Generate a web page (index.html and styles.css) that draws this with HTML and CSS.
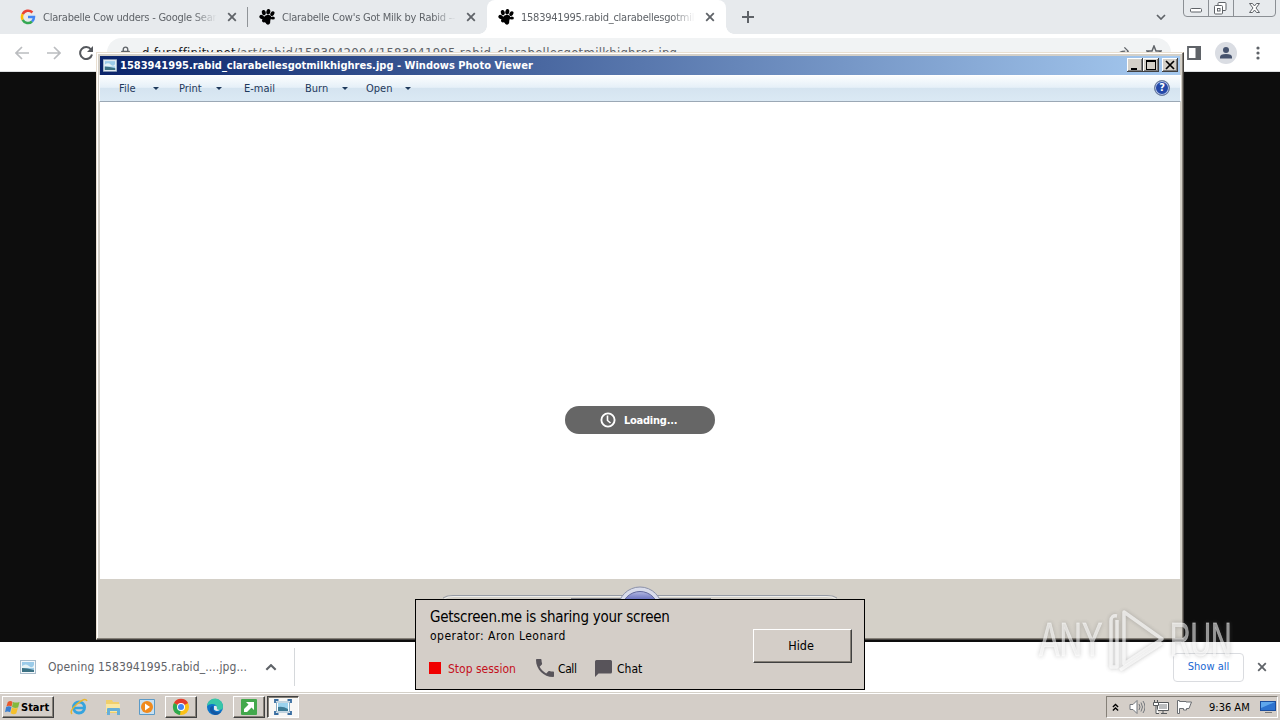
FILE: index.html
```html
<!DOCTYPE html>
<html lang="en">
<head>
    <meta charset="UTF-8">
    <title>Desktop</title>
    <link rel="stylesheet" href="styles.css">
</head>
<body>
    <svg class="defs" width="0" height="0">
        <symbol id="paw" viewBox="0 0 16 16">
            <g fill="#000">
                <ellipse cx="2.7" cy="8" rx="2.4" ry="2" transform="rotate(30 2.7 8)"/>
                <ellipse cx="4.8" cy="3.6" rx="2" ry="2.7" transform="rotate(-15 4.8 3.6)"/>
                <ellipse cx="9.3" cy="2.8" rx="2" ry="2.8" transform="rotate(12 9.3 2.8)"/>
                <ellipse cx="13.4" cy="4.6" rx="1.8" ry="2.5" transform="rotate(35 13.4 4.6)"/>
                <ellipse cx="13.8" cy="9" rx="2.1" ry="1.6"/>
                <path d="M4.5 8.5Q7 4.8 11 6.3Q13 7.4 11.8 10Q11 12 11.2 14Q9.5 16.8 7.4 14.9Q6.6 12.7 4.5 13.4Q1.4 12.4 4.5 8.5Z"/>
            </g>
        </symbol>
        <symbol id="cross" viewBox="0 0 10 10">
            <path d="M1.2 1.2l7.6 7.6M8.8 1.2L1.2 8.8" stroke="#5f6368" stroke-width="1.8"/>
        </symbol>
        <symbol id="picture" viewBox="0 0 16 14">
            <rect x=".5" y=".5" width="15" height="13" fill="#f4f8fb" stroke="#a9bccb"/>
            <rect x="2" y="2" width="12" height="10" fill="#9bcbe9"/>
            <path d="M2 6q4-3 7 0t5-1v3H2z" fill="#e4f2f5"/>
            <path d="M2 8q5 0 12 2v2H2z" fill="#3c7284"/>
        </symbol>
    </svg>

    <div class="browser">
        <div class="tabs">
            <div class="tab tab-first">
                <svg class="favicon" viewBox="0 0 16 16" fill="none" stroke-width="2.5">
                    <path d="M12.4 3.5A6 6 0 0 0 2.7 5.2" stroke="#ea4335"/>
                    <path d="M2.7 5.2a6 6 0 0 0 0 5.6" stroke="#fbbc05"/>
                    <path d="M2.7 10.8a6 6 0 0 0 9.3 1.7" stroke="#34a853"/>
                    <path d="M8 8h6a6 6 0 0 1-2 4.5" stroke="#4285f4"/>
                </svg>
                <span class="tab-title">Clarabelle Cow udders - Google Sear</span>
                <svg class="tab-close"><use href="#cross"/></svg>
            </div>
            <div class="tab tab-second">
                <svg class="favicon"><use href="#paw"/></svg>
                <span class="tab-title">Clarabelle Cow's Got Milk by Rabid --</span>
                <svg class="tab-close"><use href="#cross"/></svg>
            </div>
            <div class="tab tab-active">
                <svg class="favicon"><use href="#paw"/></svg>
                <span class="tab-title">1583941995.rabid_clarabellesgotmil</span>
                <svg class="tab-close"><use href="#cross"/></svg>
            </div>
            <svg class="new-tab" viewBox="0 0 12 12"><path d="M6 0v12M0 6h12" stroke="#5f6368" stroke-width="2"/></svg>
            <svg class="tab-search" viewBox="0 0 10 6"><path d="M1 1l4 4 4-4" fill="none" stroke="#5f6368" stroke-width="1.7"/></svg>
            <svg class="caption-buttons" viewBox="0 0 94 18" fill="none">
                <path d="M.5 0v13q0 3.500 3.500 3.500h85q3.500 0 3.500-3.500V0M25.500 0v16M50.500 0v16" stroke="#8b8f94"/>
                <rect x="7.500" y="8.500" width="11" height="3.500" rx="1" stroke="#5f6368" fill="#fff"/>
                <rect x="35" y="2.500" width="8" height="8" rx="1" stroke="#5f6368" fill="#fff"/>
                <rect x="31.500" y="5.500" width="8" height="8.500" rx="1" stroke="#5f6368" fill="#fff"/>
                <rect x="34.500" y="8.500" width="2.500" height="2.500" stroke="#5f6368"/>
                <path d="M66.500 3.500h3l2 2.500 2-2.500h3l-3.500 4.500 3.500 4.500h-3l-2-2.500-2 2.500h-3l3.500-4.500z" stroke="#5f6368" fill="#fff"/>
            </svg>
        </div>
        <div class="nav">
            <svg class="nav-arrow" viewBox="0 0 14 14"><path d="M14 7H1M7 1L1 7l6 6" fill="none" stroke="#bbbdc0" stroke-width="1.7"/></svg>
            <svg class="nav-arrow" viewBox="0 0 14 14"><path d="M0 7h13M7 1l6 6-6 6" fill="none" stroke="#bbbdc0" stroke-width="1.7"/></svg>
            <svg class="nav-reload" viewBox="0 0 14 14"><path d="M12 3.500A6 6 0 1 0 13 8.500" fill="none" stroke="#55585d" stroke-width="2"/><path d="M14 0v6H8z" fill="#55585d"/></svg>
            <div class="address">
                <svg class="lock" viewBox="0 0 10 14"><path d="M2.500 6V3.500a2.500 2.500 0 0 1 5 0V6" fill="none" stroke="#5f6368" stroke-width="1.500"/><rect x="0" y="5" width="10" height="8" rx="1" fill="#5f6368"/></svg>
                <span class="url"><b>d.furaffinity.net</b>/art/rabid/1583942004/1583941995.rabid_clarabellesgotmilkhighres.jpg</span>
                <svg class="share" viewBox="0 0 16 14"><path d="M1 13V6M3 10q1-5 8-5M10 1l4 4-4 4" fill="none" stroke="#5f6368" stroke-width="1.500"/></svg>
                <svg class="star" viewBox="0 0 16 16"><path d="M8 1l2 5h5l-4 3 1.500 5L8 11l-4.500 3L5 9 1 6h5z" fill="none" stroke="#5f6368" stroke-width="1.500"/></svg>
            </div>
            <svg class="side-panel" viewBox="0 0 14 14"><path d="M1 1h12v12H1z" fill="#fff" stroke="#5f6368" stroke-width="1.800"/><path d="M8.500 0H14v14H8.500z" fill="#5f6368"/></svg>
            <svg class="avatar" viewBox="0 0 22 22"><circle cx="11" cy="11" r="11" fill="#dadde3"/><circle cx="11" cy="8" r="3" fill="#46536e"/><path d="M5 16.500v-1.500q0-3 6-3t6 3v1.500z" fill="#46536e"/></svg>
            <svg class="dots" viewBox="0 0 4 14" fill="#5f6368"><circle cx="2" cy="2" r="1.600"/><circle cx="2" cy="7" r="1.600"/><circle cx="2" cy="12" r="1.600"/></svg>
        </div>
        <div class="page"></div>
        <div class="downloads">
            <div class="download-item">
                <svg class="file-icon"><use href="#picture"/></svg>
                <span class="file-name">Opening 1583941995.rabid_....jpg...</span>
                <svg class="chevron-up" viewBox="0 0 10 6"><path d="M1 5l4-4 4 4" fill="none" stroke="#5f6368" stroke-width="1.800"/></svg>
            </div>
            <div class="show-all">Show all</div>
            <svg class="shelf-close"><use href="#cross"/></svg>
        </div>
    </div>

    <div class="viewer">
        <div class="viewer-title">
            <svg class="viewer-icon"><use href="#picture"/></svg>
            <span class="viewer-name">1583941995.rabid_clarabellesgotmilkhighres.jpg - Windows Photo Viewer</span>
            <div class="classic-buttons">
                <svg viewBox="0 0 16 14"><path d="M4 10h6v2H4z"/></svg>
                <svg viewBox="0 0 16 14"><path d="M3 2h10v10H3zM4 4v7h8V4z" fill-rule="evenodd"/></svg>
                <svg class="classic-close" viewBox="0 0 16 14"><path d="M4 3l8 8M12 3l-8 8" stroke="#000" stroke-width="1.700"/></svg>
            </div>
        </div>
        <div class="viewer-menu">
            <span class="menu-file">File</span><i class="drop"></i>
            <span class="menu-print">Print</span><i class="drop"></i>
            <span class="menu-email">E-mail</span>
            <span class="menu-burn">Burn</span><i class="drop"></i>
            <span class="menu-open">Open</span><i class="drop"></i>
            <div class="help">?</div>
        </div>
        <div class="viewer-canvas">
            <div class="loading">
                <svg class="clock" viewBox="0 0 16 16" fill="none" stroke="#fff"><circle cx="8" cy="8" r="6.600" stroke-width="1.900"/><path d="M7.500 3.500v5l3 2.500" stroke-width="1.600"/></svg>
                <span>Loading...</span>
            </div>
        </div>
        <div class="viewer-controls">
            <svg viewBox="0 0 400 56" fill="none">
                <defs>
                    <linearGradient id="orb" x1="0" y1="0" x2="0" y2="1"><stop offset="0" stop-color="#b4b9e2"/><stop offset=".25" stop-color="#5f68bb"/><stop offset="1" stop-color="#28307c"/></linearGradient>
                </defs>
                <path d="M3 19q3-2.500 10-2.500h374q7 0 10 2.500" stroke="#969ba5"/>
                <path d="M4 20q3-2.500 10-2.500h372q7 0 10 2.500" stroke="#eeeeec"/>
                <path d="M131 19.500h140" stroke="#83858b"/>
                <circle cx="200" cy="30" r="22" fill="#d9dceb" stroke="#8b91aa"/>
                <circle cx="200" cy="31" r="18.500" fill="url(#orb)" stroke="#62699d"/>
            </svg>
        </div>
    </div>

    <div class="share-box">
        <div class="share-info">
            <div class="share-heading">Getscreen.me is sharing your screen</div>
            <div class="share-operator">operator: Aron Leonard</div>
            <div class="share-actions">
                <i class="stop-icon"></i><span class="stop">Stop session</span>
                <svg class="phone" viewBox="3 3 18 18"><path d="M6.620 10.790c1.440 2.830 3.760 5.140 6.590 6.590l2.200-2.200c.27-.27.67-.36 1.020-.24 1.120.37 2.330.57 3.570.57.55 0 1 .45 1 1V20c0 .55-.45 1-1 1C10.610 21 3 13.390 3 4c0-.55.45-1 1-1h3.500c.55 0 1 .45 1 1 0 1.250.2 2.450.57 3.570.11.35.03.74-.25 1.020z" fill="#58545a"/></svg>
                <span class="call">Call</span>
                <svg class="bubble" viewBox="0 0 17 17"><path d="M1.500 0h14Q17 0 17 1.500v10.500q0 1.500-1.500 1.500H3.500L0 17V1.500Q0 0 1.500 0z" fill="#58545a"/></svg>
                <span class="chat">Chat</span>
            </div>
        </div>
        <div class="hide-button">Hide</div>
    </div>

    <div class="taskbar">
        <div class="start">
            <svg class="start-logo" viewBox="0 0 16 16">
                <path d="M3 2q3-2 5 0L7 7Q4 5.500 1.500 7z" fill="#e8582b"/>
                <path d="M8.500 2q3 1.500 7 0L14 8q-3 1.200-6.500-.5z" fill="#83b93c"/>
                <path d="M1.200 7.500q3-1.500 5.700 0L5.500 13q-3-1.500-5.500 0z" fill="#3a7fd0"/>
                <path d="M7.400 8q3 1.500 6.300.5L12 14.500q-3 1.500-6-.5z" fill="#f5c02c"/>
            </svg>
            <span>Start</span>
        </div>
        <div class="task">
            <svg viewBox="0 0 18 18" fill="none"><circle cx="9" cy="9.500" r="5.500" stroke="#35a4df" stroke-width="3"/><path d="M5 10h10" stroke="#35a4df" stroke-width="2.500"/><path d="M2 16Q-1 13 7 6T17 3" stroke="#e9b62e" stroke-width="1.500"/></svg>
        </div>
        <div class="task">
            <svg viewBox="0 0 18 18"><path d="M2 2h6l1 2h6v11H2z" fill="#f0cf6c"/><path d="M2 6h14v8H2z" fill="#f9e7a2"/><path d="M3 17v-6q0-1 1-1h11q1 0 1 1v6h-3v-4H6v4z" fill="#67afd8"/></svg>
        </div>
        <div class="task">
            <svg viewBox="0 0 18 18"><path d="M1.500 1.500h15v15h-15z" fill="#c8e0f1" stroke="#5b9ac7"/><circle cx="9" cy="9" r="6" fill="#f08a1d"/><path d="M7 5.500l5 3.500-5 3.500z" fill="#fff"/></svg>
        </div>
        <div class="task task-open">
            <svg viewBox="0 0 18 18"><circle cx="9" cy="9" r="8" fill="#fbc116"/><path d="M9 9L2 5a8 8 0 0 1 14 0z" fill="#e33b2e"/><path d="M9 9l-1 8A8 8 0 0 1 2 5z" fill="#2da94f"/><circle cx="9" cy="9" r="4" fill="#fff"/><circle cx="9" cy="9" r="3" fill="#4285f4"/></svg>
        </div>
        <div class="task task-edge">
            <svg viewBox="0 0 18 18"><circle cx="9" cy="9" r="8" fill="#0d75c9"/><path d="M1 8a8 8 0 0 1 16 1q0 3-4 3-3 0-2-2 0-4-5-4Q3 6 1 8z" fill="#38c6a7"/><path d="M7 8q-1 5 3 6 3 1 5-.5Q13 17 9 17 3 15 4 10q1-2 3-2z" fill="#1457a2"/><path d="M8 8q2-1 3 1-1 3 3 3-4 2-6-.5z" fill="#e2e9ec"/></svg>
        </div>
        <div class="task task-open">
            <svg viewBox="0 0 18 18"><rect x="1" y="1" width="16" height="16" rx="1" fill="#43a84c"/><path d="M6 4h8v8l-2.500-2.500L7 14H4v-3l4.500-4.500z" fill="#fff"/></svg>
        </div>
        <div class="task task-open task-current">
            <svg viewBox="0 0 18 18"><path d="M2.500 4h13v10h-13z" fill="#fff" stroke="#8aaec6"/><rect x="4" y="5" width="10" height="8" fill="#9bd2ed"/><path d="M4 9q5-1 10 2v2H4z" fill="#3d7a94"/><path d="M1 5V2h3.500M13.500 2H17v3M17 13v3h-3.500M4.500 16H1v-3" fill="none" stroke="#376ca0" stroke-width="1.800"/></svg>
        </div>
        <div class="tray">
            <svg class="tray-up" viewBox="0 0 8 9"><path d="M1 4l3-3 3 3M1 8l3-3 3 3" fill="none" stroke="#000" stroke-width="1.500"/></svg>
            <svg class="tray-icon" viewBox="0 0 16 16" fill="none" stroke="#73777c"><path d="M1 5.500h3l4-4v13l-4-4H1z" fill="#fff"/><path d="M10 5q2 3 0 6M12 3.500q3 4.500 0 9M14 2q4 6 0 12"/></svg>
            <svg class="tray-icon tray-net" viewBox="0 0 16 16" fill="none" stroke="#55585b"><path d="M4.500 3.500h11v8h-11z" fill="#fff"/><path d="M6 5h8v5H6z" fill="#babcbe" stroke="none"/><path d="M8 14.500h6M10 12v2M.5 3.500h5v3h-5zM1.500 1v2M4.500 1v2M3 7v7.500h3" fill="#fff"/></svg>
            <svg class="tray-icon tray-flag" viewBox="0 0 16 16"><path d="M.5 1.500v13h2v-5h4v1.500h3V9.500h2.500L14.500 3H9V2.500H2.500v-1z" fill="#fff" stroke="#6b6e72"/></svg>
            <span class="time">9:36 AM</span>
            <svg class="desktop-icon" viewBox="0 0 16 14"><path d="M0 1h16v10H0z" fill="#1b4d9c"/><path d="M1 2h14v8H1z" fill="#2d73cf"/><path d="M1 2h14L1 8z" fill="#5fa7ec"/><path d="M5 12h7v1H5z" fill="#777"/></svg>
        </div>
    </div>

    <div class="watermark">
        <span class="mark-any">ANY</span>
        <svg viewBox="0 0 58 66" fill="none"><g stroke="#fff" stroke-opacity=".7" stroke-width="3.500" stroke-linejoin="round"><path d="M16 4L54 31 16 56z"/><path d="M9 8q-6-1-6 5v46h6V12M12 62l42-27"/></g></svg>
        <span class="mark-run">RUN</span>
    </div>
</body>
</html>
```
FILE: styles.css
```css
* {
    box-sizing: border-box;
}

body {
    margin: 0;
    width: 1280px;
    height: 720px;
    overflow: hidden;
    position: relative;
    display: flex;
    flex-direction: column;
    background: #0d0d0d;
    font-family: "DejaVu Sans Condensed", "DejaVu Sans", sans-serif;
    font-stretch: condensed;
    font-size: 11px;
    white-space: nowrap;
}

svg {
    display: block;
    flex: none;
}

.defs {
    position: absolute;
}

/* browser */
.browser {
    display: flex;
    flex-direction: column;
    height: 692px;
}

.tabs {
    display: flex;
    align-items: center;
    height: 34px;
    background: #e7eaed;
}

.tab {
    display: flex;
    align-items: center;
    height: 34px;
    color: #5f6368;
}

.tab-first {
    width: 248px;
    padding-left: 20px;
    background: linear-gradient(#909498, #909498) right center / 1px 20px no-repeat;
}

.tab-second {
    width: 239px;
    padding-left: 11px;
}

.tab-active {
    position: relative;
    width: 239px;
    padding-left: 11px;
    background: #fff;
    border-radius: 8px 8px 0 0;
}

.tab-active::before,
.tab-active::after {
    content: "";
    position: absolute;
    bottom: 0;
    left: -8px;
    width: 8px;
    height: 8px;
    background: radial-gradient(circle at 0 0, transparent 7.5px, #fff 8px);
}

.tab-active::after {
    left: auto;
    right: -8px;
    background: radial-gradient(circle at 100% 0, transparent 7.5px, #fff 8px);
}

.favicon {
    width: 16px;
    height: 16px;
}

.tab-title {
    width: 174px;
    margin-left: 7px;
    overflow: hidden;
    letter-spacing: -.24px;
    -webkit-mask-image: linear-gradient(to right, #000 150px, transparent);
}

.tab-close {
    width: 10px;
    height: 10px;
    margin-left: 10px;
}

.new-tab {
    width: 12px;
    height: 12px;
    margin-left: 16px;
}

.tab-search {
    width: 10px;
    height: 6px;
    margin-left: auto;
}

.caption-buttons {
    width: 94px;
    height: 18px;
    margin-left: 17px;
    margin-right: 3px;
    align-self: flex-start;
}

.nav {
    display: flex;
    align-items: center;
    height: 38px;
    padding-left: 15px;
    background: #fff;
    border-bottom: 1px solid #dcdfe1;
}

.nav-arrow {
    width: 14px;
    height: 14px;
    margin-right: 18px;
}

.nav-reload {
    width: 14px;
    height: 14px;
}

.address {
    display: flex;
    align-items: center;
    width: 1064px;
    height: 29px;
    margin-left: 14px;
    padding-left: 14px;
    border-radius: 15px;
    background: #f1f3f4;
}

.lock {
    width: 9px;
    height: 13px;
}

.url {
    width: 536px;
    margin-left: 12px;
    font-size: 13px;
    letter-spacing: .27px;
    color: #606368;
}

.url b {
    font-weight: normal;
    color: #202124;
}

.share {
    width: 15px;
    height: 14px;
    margin-left: 437px;
}

.star {
    width: 16px;
    height: 16px;
    margin-left: 16px;
}

.side-panel {
    width: 14px;
    height: 14px;
    margin-left: 16px;
}

.avatar {
    width: 22px;
    height: 22px;
    margin-left: 14px;
}

.dots {
    width: 4px;
    height: 14px;
    margin-left: 19px;
}

.page {
    flex: 1;
    background: #0d0d0d;
}

.downloads {
    display: flex;
    align-items: center;
    height: 50px;
    background: #fff;
}

.download-item {
    display: flex;
    align-items: center;
    width: 295px;
    height: 38px;
    padding-left: 20px;
    border-right: 1px solid #d5d8db;
}

.file-icon {
    width: 16px;
    height: 14px;
}

.file-name {
    width: 200px;
    margin-left: 12px;
    font-size: 12px;
    letter-spacing: .12px;
    color: #5f6368;
}

.chevron-up {
    width: 12px;
    height: 7px;
    margin-left: 17px;
}

.show-all {
    width: 71px;
    height: 29px;
    margin-left: auto;
    line-height: 25px;
    text-align: center;
    color: #1967d2;
    border: 1px solid #dadce0;
    border-radius: 4px;
}

.shelf-close {
    width: 10px;
    height: 10px;
    margin: 0 13px;
}

/* photo viewer */
.viewer {
    position: absolute;
    left: 96px;
    top: 52px;
    width: 1088px;
    height: 588px;
    display: flex;
    flex-direction: column;
    padding: 2px;
    background: #d4d0c8;
    border: 1px solid;
    border-color: #e9dfd1 #45423f #45423f #e9dfd1;
    box-shadow: inset -1px -1px #858078, inset 1px 1px #fff;
}

.viewer-title {
    display: flex;
    align-items: center;
    height: 19px;
    margin: 1px 1px 0;
    padding: 0 2px 1px 3px;
    background: linear-gradient(to right, #0a246a, #a6caf0);
    color: #fff;
    font-weight: bold;
}

.viewer-icon {
    width: 14px;
    height: 13px;
}

.viewer-name {
    margin-left: 3px;
    letter-spacing: .01px;
}

.classic-buttons {
    display: flex;
    margin-left: auto;
}

.classic-buttons svg {
    width: 16px;
    height: 14px;
    background: #d4d0c8;
    box-shadow: inset -1px -1px #404040, inset 1px 1px #fff, inset -2px -2px #808080;
}

.classic-buttons .classic-close {
    margin-left: 3px;
}

.viewer-menu {
    display: flex;
    align-items: center;
    height: 27px;
    padding: 0 10px 1px 19px;
    background: linear-gradient(#fbfdfe, #e6f0f8 45%, #d5e4f0 50%, #dbe9f4);
    border: 1px solid #fff;
    border-bottom-color: #9ba8b5;
    color: #1e395b;
}

.viewer-menu span {
    flex: none;
}

.menu-file {
    width: 34px;
}

.menu-print {
    width: 37px;
    margin-left: 20px;
}

.menu-email {
    width: 61px;
    margin-left: 22px;
}

.menu-burn {
    width: 37px;
}

.menu-open {
    width: 39px;
    margin-left: 18px;
}

.drop {
    flex: none;
    width: 6px;
    border: 3px solid transparent;
    border-top-color: #1e395b;
    border-bottom: 0;
}

.help {
    width: 16px;
    height: 16px;
    margin-left: auto;
    border: 1px solid #71809a;
    border-radius: 50%;
    background: #2448a8;
    box-shadow: inset 0 0 0 1px #b8c7e8;
    color: #fff;
    font-weight: bold;
    line-height: 14px;
    text-align: center;
}

.viewer-canvas {
    display: flex;
    justify-content: center;
    height: 477px;
    margin: 0 1px;
    background: #fff;
}

.loading {
    display: flex;
    align-items: center;
    width: 150px;
    height: 28px;
    margin-top: 304px;
    padding-left: 35px;
    border-radius: 14px;
    background: #666;
    color: #fff;
    font-weight: bold;
    letter-spacing: -.25px;
}

.clock {
    width: 16px;
    height: 16px;
    margin-right: 8px;
}

.viewer-controls {
    display: flex;
    justify-content: center;
    height: 57px;
}

.viewer-controls svg {
    width: 400px;
    height: 56px;
}

/* screen sharing notice */
.share-box {
    position: absolute;
    left: 415px;
    top: 599px;
    width: 450px;
    height: 91px;
    display: flex;
    justify-content: space-between;
    padding: 8px 12px 0 14px;
    background: #d4cec8;
    border: 1px solid #000;
    color: #000;
}

.share-heading {
    font-size: 15px;
    line-height: 19px;
    letter-spacing: -.24px;
}

.share-operator {
    font-size: 12px;
    line-height: 19px;
    letter-spacing: .48px;
}

.share-actions {
    display: flex;
    align-items: center;
    height: 22px;
    margin: 11px 0 0 -1px;
    font-size: 12px;
}

.stop-icon {
    width: 12px;
    height: 12px;
    background: #f00000;
}

.stop {
    width: 70px;
    margin: 0 18px 0 7px;
    color: #c4101c;
}

.share-actions span {
    padding-top: 1px;
}

.phone {
    width: 18px;
    height: 18px;
}

.call {
    width: 19px;
    margin: 0 18px 0 4px;
    letter-spacing: -.4px;
}

.bubble {
    width: 17px;
    height: 17px;
}

.chat {
    margin-left: 5px;
}

.hide-button {
    width: 99px;
    height: 34px;
    margin-top: 21px;
    padding-right: 3px;
    border: 1px solid;
    border-color: #fff #404040 #404040 #fff;
    box-shadow: inset -1px -1px #858078;
    font-size: 12.5px;
    line-height: 31px;
    text-align: center;
}

/* taskbar */
.taskbar {
    display: flex;
    align-items: center;
    height: 28px;
    padding: 2px 2px 1px;
    background: #d4cec8;
    border-top: 1px solid #d4d0c8;
    box-shadow: inset 0 1px #fff;
}

.start {
    display: flex;
    align-items: center;
    width: 52px;
    height: 22px;
    margin-right: 9px;
    padding-left: 2px;
    font-weight: bold;
    border: 1px solid;
    border-color: #fff #404040 #404040 #fff;
    box-shadow: inset -1px -1px #858078;
}

.start-logo {
    width: 15px;
    height: 15px;
    margin-right: 1px;
}

.task {
    display: flex;
    align-items: center;
    justify-content: center;
    width: 32px;
    height: 22px;
    margin-right: 2px;
}

.task svg {
    width: 18px;
    height: 18px;
}

.task-open {
    border: 1px solid;
    border-color: #fff #404040 #404040 #fff;
    box-shadow: inset -1px -1px #858078;
}

.task-current {
    background: #f8f7f5;
    border-color: #404040 #fff #fff #404040;
    box-shadow: inset 1px 1px #858078;
}

.tray {
    display: flex;
    align-items: center;
    width: 172px;
    height: 22px;
    margin-left: auto;
    padding-left: 5px;
    border: 1px solid;
    border-color: #858078 #fff #fff #858078;
}

.tray-up {
    width: 7px;
    height: 9px;
    margin-right: 10px;
}

.tray-icon {
    width: 16px;
    height: 16px;
}

.tray-net {
    margin-left: 8px;
}

.tray-flag {
    margin-left: 8px;
}

.time {
    width: 42px;
    margin-left: 16px;
}

.desktop-icon {
    width: 16px;
    height: 14px;
    margin-left: 9px;
}

/* watermark over the lower right corner */
.watermark {
    position: absolute;
    left: 1039px;
    top: 608px;
    display: flex;
    align-items: center;
    width: 196px;
    height: 66px;
    opacity: .9;
    filter: drop-shadow(0 0 2px rgba(100, 100, 100, .6));
}

.watermark span {
    flex: none;
    width: 64px;
    height: 40px;
    margin-bottom: 4px;
    font: 49px/40px "Liberation Sans", sans-serif;
    color: rgba(255, 255, 255, .6);
    -webkit-text-stroke: .8px rgba(255, 255, 255, .5);
    transform: scaleX(.63);
    transform-origin: 0 50%;
}

.watermark svg {
    width: 58px;
    height: 66px;
    margin: 0 4px 0 5px;
}

.watermark .mark-run {
    transform: scaleX(.58);
}
```
